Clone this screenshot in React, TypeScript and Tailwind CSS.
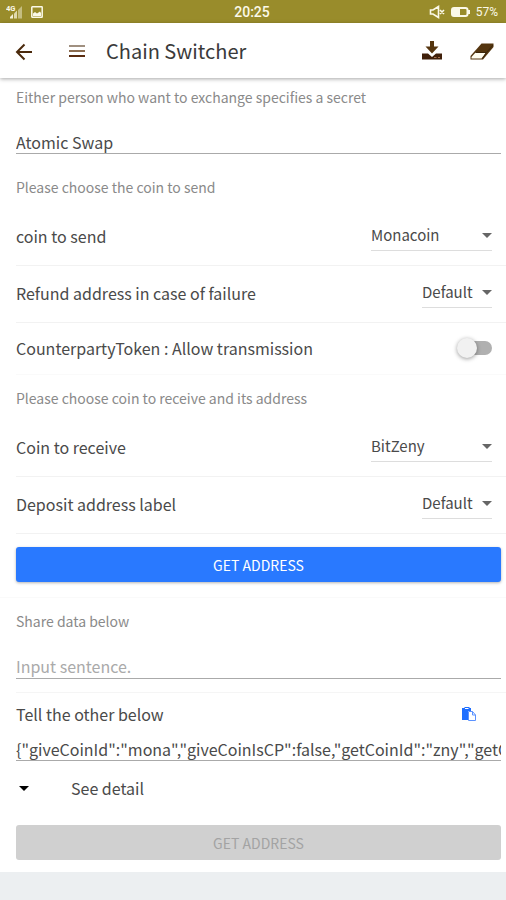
import { useState } from "react";
import type { ReactNode } from "react";

const Caret = ({ className }: { className: string }) => (
  <svg className={className} viewBox="0 0 10 5" fill="currentColor" aria-hidden="true">
    <path d="M0 0h10L5 5z" />
  </svg>
);

const StatusBar = () => (
  <div className="grid h-[23px] grid-cols-3 items-center bg-[#998c2b] pr-2 pl-1.5 font-['Roboto',sans-serif] text-[#fbf9e8]">
    <div className="flex items-center gap-2">
      <svg className="h-4 w-[17px]" viewBox="0 0 17 16" aria-hidden="true">
        <text x="0" y="7" fontSize="7.500" fontWeight="700" fill="currentColor">
          4G
        </text>
        <path d="M4 14.500v-1.500l3-3v4.500z" fill="#f3f0d8" />
        <path d="M8 14.500V9.500l3-3v8z" fill="#e0daae" />
        <path d="M12 14.500V6l4-4v12.500z" fill="#c5bd80" />
      </svg>
      <svg className="h-3 w-3" viewBox="0 0 12 12" aria-hidden="true">
        <rect x="0.800" y="0.800" width="10.400" height="10.400" rx="0.500" fill="none" stroke="currentColor" strokeWidth="1.500" />
        <path d="M2 10V7.500l2-1.500 2 1.500 3-2 1 1.500v3z" fill="currentColor" />
      </svg>
    </div>
    <p className="text-center text-sm font-medium">20:25</p>
    <div className="flex items-center justify-end gap-1.5">
      <svg className="h-3.5 w-4" viewBox="0 0 16 14" fill="none" stroke="currentColor" strokeWidth="1.600" aria-hidden="true">
        <path d="M1.500 5h2.500L9.500 1.500v11L4 9H1.500zM11 5l4 4M15 5l-4 4" />
      </svg>
      <svg className="h-2.5 w-[19px]" viewBox="0 0 19 10" aria-hidden="true">
        <rect x="1" y="1" width="15.500" height="8" rx="2" fill="none" stroke="currentColor" strokeWidth="2" />
        <path d="M2 2h7v6H2zM17 3h2v4h-2z" fill="currentColor" />
      </svg>
      <span className="text-xs">57%</span>
    </div>
  </div>
);

const Header = () => (
  <header className="relative flex h-[55px] items-center bg-white pr-3 pl-3.5 text-[#4b2a0c] shadow-[0_1px_4px_rgba(0,0,0,0.35)]">
    <button type="button" aria-label="Back">
      <svg className="h-5 w-5" viewBox="0 0 20 20" fill="none" stroke="currentColor" strokeWidth="2" aria-hidden="true">
        <path d="M18 11H3.500M10.500 3.500L3 11l7.500 7.500" />
      </svg>
    </button>
    <button type="button" aria-label="Menu" className="ml-[34px]">
      <svg className="h-5 w-[18px]" viewBox="0 0 18 20" aria-hidden="true">
        <path d="M1 4h16v2H1z" fill="#a09080" />
        <path d="M1 9h16v2H1z" fill="#8b6c50" />
        <path d="M1 14h16v2H1z" fill="#5a2c10" />
      </svg>
    </button>
    <h1 className="ml-5 text-xl text-[#3a3a3a]">Chain Switcher</h1>
    <div className="ml-auto flex items-center gap-7">
      <button type="button" aria-label="Download">
        <svg className="h-5 w-5" viewBox="0 0 20 20" aria-hidden="true">
          <path d="M8 0h4v5.500h4.500L10 12.500 3.500 5.500H8z" fill="#55350f" />
          <path d="M0 12.500h6l4 3.500 4-3.500h6v6H0z" fill="#40200a" />
          <path d="M12 16.500h2.500M16 16.500h2" stroke="#a5714c" />
        </svg>
      </button>
      <button type="button" aria-label="Clear">
        <svg className="h-5 w-6" viewBox="0 0 24 20" aria-hidden="true">
          <path d="M11.500 2.500h12v3.500L13 18.500H0.500v-3.500z" fill="#54350f" />
          <path d="M5.500 11.500h10.500l-4.500 6H1.500v-1.500z" fill="#fffdf0" />
          <path d="M5.500 11.500H16.500L23 4M16.500 11.500L12.500 17.500" fill="none" stroke="#3b260a" />
        </svg>
      </button>
    </div>
  </header>
);

const SectionLabel = ({ children }: { children: ReactNode }) => (
  <h2 className="flex h-[45px] items-center pl-4 text-sm text-[#8a8a8a]">{children}</h2>
);

type SelectRowProps = {
  id: string;
  label: string;
  value: string;
  wide?: boolean;
};

const SelectRow = ({ id, label, value, wide }: SelectRowProps) => (
  <div className="ml-4 flex h-[57px] items-center justify-between border-b border-[#f2f2f2] pr-3.5 pb-0.5">
    <label htmlFor={id}>{label}</label>
    <div className={`grid items-center border-b border-[#ddd] ${wide ? "w-[121px]" : "w-[70px]"}`}>
      <select
        id={id}
        defaultValue={value}
        className="col-start-1 row-start-1 h-7 w-full appearance-none bg-transparent text-[15px] outline-none"
      >
        <option>{value}</option>
      </select>
      <Caret className="pointer-events-none col-start-1 row-start-1 h-[5px] w-2.5 justify-self-end text-[#666]" />
    </div>
  </div>
);

const App = () => {
  const [allow, setAllow] = useState(false);

  return (
    <div className="min-h-screen bg-[#eceff1] font-['Noto_Sans_CJK_JP',sans-serif] text-base text-[#4a4a4a]">
      <StatusBar />
      <Header />
      <main className="bg-white pb-3">
        <label htmlFor="secret" className="flex h-10 items-center pb-0.5 pl-4 text-sm text-[#8a8a8a]">
          Either person who want to exchange specifies a secret
        </label>
        <div className="pt-3 pr-[5px] pb-2.5 pl-4">
          <input
            id="secret"
            defaultValue="Atomic Swap"
            className="block h-6 w-full border-b border-[#aaa] outline-none"
          />
        </div>

        <SectionLabel>Please choose the coin to send</SectionLabel>
        <SelectRow id="send" label="coin to send" value="Monacoin" wide />
        <SelectRow id="refund" label="Refund address in case of failure" value="Default" />
        <div className="ml-4 flex h-[52px] items-center justify-between border-b border-[#fafafa] pr-3.5 pb-0.5">
          <label htmlFor="allow">CounterpartyToken : Allow transmission</label>
          <input
            id="allow"
            type="checkbox"
            role="switch"
            checked={allow}
            onChange={(e) => setAllow(e.target.checked)}
            className="relative h-3.5 w-[34px] appearance-none rounded-full bg-[#b0b0b0] before:absolute before:-top-[3px] before:-left-px before:h-5 before:w-5 before:rounded-full before:bg-[#f1f1f1] before:shadow-[0_1px_4px_rgba(0,0,0,0.4)] checked:before:left-4"
          />
        </div>

        <SectionLabel>Please choose coin to receive and its address</SectionLabel>
        <SelectRow id="receive" label="Coin to receive" value="BitZeny" wide />
        <SelectRow id="deposit" label="Deposit address label" value="Default" />
        <div className="border-b border-[#fafafa] pt-[13px] pr-[5px] pb-[15px] pl-4">
          <button
            type="button"
            className="block h-[35px] w-full rounded-[3px] bg-[#2979ff] text-sm text-white shadow-[0_1px_3px_rgba(0,0,0,0.3)]"
          >
            GET ADDRESS
          </button>
        </div>

        <SectionLabel>Share data below</SectionLabel>
        <div className="ml-4 border-b border-[#f5f5f5] pt-3 pr-[5px] pb-[13px]">
          <input
            aria-label="Share data"
            placeholder="Input sentence."
            className="block h-6 w-full border-b border-[#aaa] pb-0.5 outline-none placeholder:text-[#aaa]"
          />
        </div>
        <div className="flex h-11 items-center justify-between pr-[29px] pb-0.5 pl-4">
          <label htmlFor="tell">Tell the other below</label>
          <button type="button" aria-label="Copy">
            <svg className="h-4 w-4" viewBox="0 0 16 16" aria-hidden="true">
              <path d="M1 2h2.500V1h5v1H10v3H7v9H1z" fill="#1f6fff" />
              <path d="M4 2.500h3.500" stroke="#fff" />
              <path d="M7.500 5.500h4l3 3.500v5.500h-7z" fill="#fff" stroke="#5b92ff" />
              <path d="M11.500 5.500V9h3" fill="none" stroke="#5b92ff" />
            </svg>
          </button>
        </div>
        <div className="pr-[5px] pl-4">
          <input
            id="tell"
            readOnly
            value={'{"giveCoinId":"mona","giveCoinIsCP":false,"getCoinId":"zny","getCoinIsCP":false}'}
            className="block h-6 w-full border-b border-[#aaa] outline-none"
          />
        </div>
        <button type="button" className="flex h-14 w-full items-center pb-0.5 pl-[19px] text-left">
          <Caret className="h-[5px] w-2.5 text-black" />
          <span className="ml-[42px]">See detail</span>
        </button>
        <div className="pt-2 pr-[5px] pl-4">
          <button type="button" disabled className="block h-[35px] w-full rounded-[3px] bg-[#d0d0d0] text-sm text-[#a3a3a3]">
            GET ADDRESS
          </button>
        </div>
      </main>
    </div>
  );
};

export default App;
